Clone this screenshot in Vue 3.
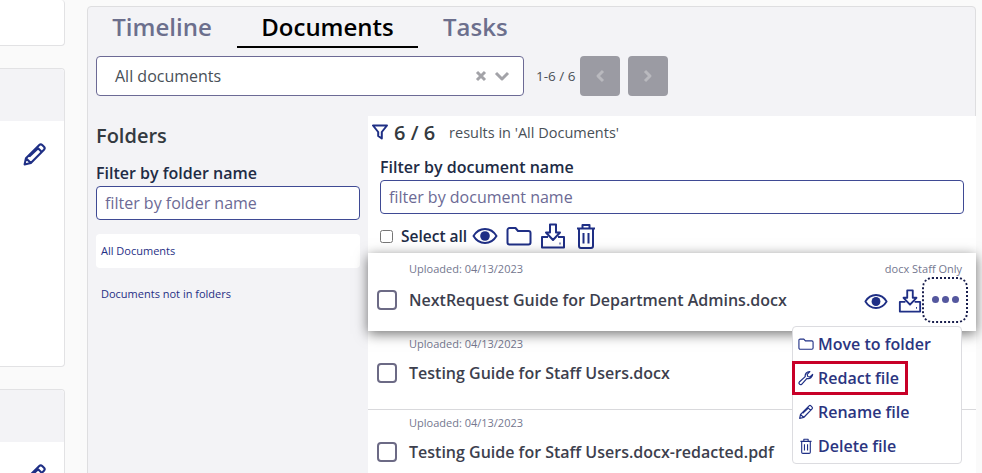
<script setup>
const rows = [
  { name: "NextRequest Guide for Department Admins.docx", active: true },
  { name: "Testing Guide for Staff Users.docx" },
  { name: "Testing Guide for Staff Users.docx-redacted.pdf" },
];
const menu = ["Move to folder", "Redact file", "Rename file", "Delete file"];
</script>

<template>
  <div class="page">
    <div class="side">
      <div class="side__card side__card--first"></div>
      <div class="side__card side__card--tall">
        <div class="side__head"></div>
        <div class="side__body">
          <svg class="side__pencil" viewBox="0 0 24 24"><path d="M2.5 21.5l1.3-6L16.6 2.9a2 2 0 0 1 2.8 0l1.7 1.7a2 2 0 0 1 0 2.8L8.500 20.200zM3.800 15.500l4.700 4.700M14.500 5l4.500 4.500M7 14L15.500 6" /></svg>
        </div>
      </div>
      <div class="side__card">
        <div class="side__head"></div>
        <div class="side__body">
          <svg class="side__pencil" viewBox="0 0 24 24"><path d="M2.5 21.5l1.3-6L16.6 2.9a2 2 0 0 1 2.8 0l1.7 1.7a2 2 0 0 1 0 2.8L8.500 20.200zM3.800 15.500l4.700 4.700M14.500 5l4.500 4.500M7 14L15.500 6" /></svg>
        </div>
      </div>
    </div>

    <div class="panel">
      <div class="tabs">
        <span class="tab tab--timeline">Timeline</span>
        <span class="tab tab--active">Documents</span>
        <span class="tab tab--tasks">Tasks</span>
      </div>

      <div class="toolbar">
        <div class="select">
          <span>All documents</span>
          <span class="select__icons">
            <svg width="12" height="12" viewBox="0 0 12 12"><path d="M2 2l8 8M10 2l-8 8" /></svg>
            <svg width="16" height="12" viewBox="0 0 16 12"><path d="M2 3l6 6 6-6" /></svg>
          </span>
        </div>
        <span class="pager">1-6 / 6</span>
        <button class="page-btn"><svg width="10" height="14" viewBox="0 0 10 14"><path d="M8 2L3 7l5 5" /></svg></button>
        <button class="page-btn"><svg width="10" height="14" viewBox="0 0 10 14"><path d="M2 2l5 5-5 5" /></svg></button>
      </div>

      <div class="content">
        <div class="folders">
          <h2>Folders</h2>
          <label class="label">Filter by folder name</label>
          <input class="input" type="text" placeholder="filter by folder name" />
          <div class="folder folder--active">All Documents</div>
          <div class="folder">Documents not in folders</div>
        </div>

        <div class="docs">
          <div class="results">
            <svg class="results__icon" viewBox="0 0 16 16"><path d="M1 1.500h14L9.800 8v6.500L6.200 12V8z" /></svg>
            <strong>6 / 6</strong>
            <span>results in 'All Documents'</span>
          </div>
          <div class="docs__filter">
            <label class="label">Filter by document name</label>
            <input class="input" type="text" placeholder="filter by document name" />
            <div class="select-all">
              <input type="checkbox" class="select-all__box" />
              <span class="select-all__text">Select all</span>
              <svg class="icon icon--eye" viewBox="0 0 26 18"><path d="M1.500 9C4.500 4 8.500 2 13 2s8.500 2 11.500 7c-3 5-7 7-11.500 7S4.500 14 1.500 9z" /><circle class="fill" cx="13" cy="9" r="4.800" /></svg>
              <svg class="icon icon--folder" viewBox="0 0 26 20"><path d="M1.500 4a2 2 0 0 1 2-2h6l2.500 3h10.500a2 2 0 0 1 2 2v9.500a2 2 0 0 1-2 2h-19a2 2 0 0 1-2-2z" /></svg>
              <svg class="icon icon--down" viewBox="0 0 26 26"><path d="M10 1.500h6v8h4L13 17 6 9.500h4zM8 14H2v10.500h22V14h-6M19.500 20.500h1" /></svg>
              <svg class="icon icon--trash" viewBox="0 0 20 26"><path d="M1 5.500h18M6.500 5.500V2h7v3.500M3 5.500v17.500a2 2 0 0 0 2 2h10a2 2 0 0 0 2-2V5.500M7.500 10v10.500M12.500 10v10.500" /></svg>
            </div>
          </div>

          <div class="rows">
            <div v-for="row in rows" :key="row.name" class="row" :class="{ 'row--active': row.active }">
              <div class="row__meta">
                <span>Uploaded: 04/13/2023</span>
                <span v-if="row.active" class="row__type">docx Staff Only</span>
              </div>
              <div class="row__main">
                <span class="row__check"></span>
                <span class="row__name">{{ row.name }}</span>
                <div v-if="row.active" class="row__actions">
                  <svg class="icon icon--eye" viewBox="0 0 26 18"><path d="M1.500 9C4.500 4 8.500 2 13 2s8.500 2 11.500 7c-3 5-7 7-11.500 7S4.500 14 1.500 9z" /><circle class="fill" cx="13" cy="9" r="4.800" /></svg>
                  <svg class="icon icon--down" viewBox="0 0 26 26"><path d="M10 1.500h6v8h4L13 17 6 9.500h4zM8 14H2v10.500h22V14h-6M19.500 20.500h1" /></svg>
                  <button class="more"><i></i><i></i><i></i></button>
                </div>
              </div>
            </div>

            <div class="menu">
              <div v-for="(item, i) in menu" :key="item" class="menu__item" :class="{ 'menu__item--hl': i === 1 }">
                <svg v-if="i === 0" viewBox="0 0 26 20" class="menu__icon"><path d="M1.500 4a2 2 0 0 1 2-2h6l2.500 3h10.500a2 2 0 0 1 2 2v9.500a2 2 0 0 1-2 2h-19a2 2 0 0 1-2-2z" /></svg>
                <svg v-if="i === 1" viewBox="0 0 24 24" class="menu__icon"><path d="M22 6.500a6.500 6.500 0 0 1-8.500 6.200L5.500 21.500a2.500 2.500 0 0 1-3.500-3.500l8.800-8a6.500 6.500 0 0 1 7-7.500l-4 4 .8 3.200 3.200.8z" /></svg>
                <svg v-if="i === 2" viewBox="0 0 24 24" class="menu__icon"><path d="M2.500 21.500l1.300-6L16.600 2.900a2 2 0 0 1 2.800 0l1.700 1.700a2 2 0 0 1 0 2.800L8.500 20.200zM3.800 15.500l4.700 4.700M14.500 5l4.500 4.500M7 14l8.500-8" /></svg>
                <svg v-if="i === 3" viewBox="0 0 20 26" class="menu__icon"><path d="M1 5.500h18M6.500 5.500V2h7v3.500M3 5.500v17.500a2 2 0 0 0 2 2h10a2 2 0 0 0 2-2V5.500M7.500 10v10.500M12.500 10v10.500" /></svg>
                <span>{{ item }}</span>
              </div>
            </div>
          </div>
        </div>
      </div>
    </div>
  </div>
</template>

<style>
html,
body {
  margin: 0;
  background: #fafafa;
}
</style>

<style scoped>
* {
  box-sizing: border-box;
}
.page {
  display: flex;
  height: 473px;
  width: 982px;
  overflow: hidden;
  font-family: "Open Sans", sans-serif;
  color: #343a40;
  background: #fafafa;
}
svg path,
svg circle {
  fill: none;
  stroke: #1f2f85;
  stroke-width: 2;
  stroke-linejoin: round;
}
svg circle.fill {
  fill: #1f2f85;
  stroke: none;
}

.side {
  width: 65px;
  flex: none;
  margin-right: 22px;
  display: flex;
  flex-direction: column;
  gap: 22px;
}
.side__card {
  flex: none;
  background: #fff;
  border: 1px solid #e2e2e4;
  border-left: 0;
  border-radius: 0 4px 4px 0;
  height: 120px;
}
.side__card--first {
  height: 46px;
  margin-top: 0;
  border-top: 0;
}
.side__card--tall {
  height: 299px;
}
.side__head {
  height: 52px;
  background: #f3f3f6;
  border-radius: 0 4px 0 0;
}
.side__body {
  display: flex;
  justify-content: flex-end;
  padding: 21px 17px 0 0;
}
.side__pencil {
  width: 25px;
  height: 25px;
}

.panel {
  width: 889px;
  flex: none;
  margin-top: 6px;
  height: 480px;
  background: #f3f3f6;
  border: 1px solid #dedee0;
  border-radius: 4px 4px 0 0;
}
.tabs {
  display: flex;
  height: 41px;
  font-size: 24px;
  font-weight: 600;
  line-height: 40px;
}
.tab {
  color: #6c6f8d;
  text-align: center;
}
.tab--timeline {
  margin-left: 24px;
  width: 100px;
}
.tab--active {
  color: #000;
  width: 181px;
  margin-left: 25px;
  border-bottom: 2px solid #000;
}
.tab--tasks {
  margin-left: 25px;
}

.toolbar {
  display: flex;
  align-items: center;
  margin: 8px 0 0 8px;
  height: 40px;
}
.select {
  width: 428px;
  height: 40px;
  display: flex;
  align-items: center;
  justify-content: space-between;
  padding: 0 13px 0 18px;
  background: #fff;
  border: 1px solid #6c6a95;
  border-radius: 4px;
  font-size: 16px;
  color: #495057;
}
.select__icons {
  display: flex;
  align-items: center;
  gap: 7px;
}
.select__icons path {
  stroke: #a3a3a8;
  stroke-width: 3;
}
.pager {
  font-size: 13.5px;
  margin-left: 12px;
  width: 44px;
  white-space: nowrap;
  color: #495057;
}
.page-btn {
  width: 40px;
  height: 40px;
  margin-right: 8px;
  padding: 0;
  border: 0;
  border-radius: 4px;
  background: #9b9ba3;
  display: flex;
  align-items: center;
  justify-content: center;
}
.page-btn path {
  stroke: #b9b9be;
  stroke-width: 3;
}

.content {
  display: flex;
  margin-top: 20px;
}
.folders {
  width: 280px;
  flex: none;
  padding-left: 8px;
}
.folders h2 {
  margin: 6px 0 0;
  font-size: 20px;
  line-height: 27px;
  font-weight: 600;
  color: #343a40;
}
.label {
  display: block;
  font-size: 16px;
  font-weight: 600;
  line-height: 22px;
  color: #212b45;
}
.folders .label {
  margin-top: 13px;
  margin-bottom: 2px;
}
.input {
  display: block;
  width: 100%;
  height: 34px;
  padding: 0 8px;
  border: 1px solid #3f4a94;
  border-radius: 4px;
  background: #fff;
  font-family: inherit;
  font-size: 16px;
}
.input::placeholder {
  color: #6c6a95;
  opacity: 1;
}
.folders .input {
  width: 264px;
}
.folder {
  width: 264px;
  height: 34px;
  margin-top: 9px;
  padding-left: 5px;
  font-size: 11px;
  line-height: 34px;
  color: #1f2f85;
}
.folder--active {
  margin-top: 14px;
  background: #fff;
  border-radius: 4px;
}

.docs {
  width: 608px;
  flex: none;
  height: 360px;
  background: #fff;
}
.results {
  display: flex;
  align-items: center;
  height: 32px;
  padding-left: 4px;
}
.results__icon {
  width: 16px;
  height: 18px;
  margin-right: 5px;
}
.results strong {
  font-size: 20px;
  font-weight: 600;
  margin-right: 14px;
  margin-left: 1px;
}
.results span {
  font-size: 14.5px;
  color: #495057;
}
.docs__filter {
  padding: 8px 12px 0;
}
.docs__filter .label {
  margin-bottom: 2px;
}
.docs__filter .input {
  width: 584px;
}
.select-all {
  display: flex;
  align-items: center;
  height: 30px;
  margin-top: 7px;
}
.select-all__box {
  width: 13px;
  height: 13px;
  margin: 0 8px 0 0;
}
.select-all__text {
  font-size: 15.500px;
  font-weight: 600;
  color: #212b45;
  margin-right: 5px;
}
.icon {
  display: block;
  flex: none;
}
.icon--eye {
  width: 26px;
  height: 18px;
}
.icon--folder {
  width: 26px;
  height: 20px;
  margin-left: 8px;
}
.icon--down {
  width: 26px;
  height: 26px;
  margin-left: 8px;
}
.icon--trash {
  width: 20px;
  height: 26px;
  margin-left: 10px;
}

.rows {
  position: relative;
  margin-top: 2px;
}
.row {
  height: 79px;
  padding: 8px 14px 0 9px;
  border-bottom: 1px solid #d9d9dc;
  background: #fff;
}
.row--active {
  position: relative;
  height: 78px;
  border-bottom: 0;
  box-shadow: 0 3px 12px rgba(0, 0, 0, 0.55);
  z-index: 1;
}
.row__meta {
  display: flex;
  justify-content: space-between;
  padding-left: 32px;
  font-size: 11px;
  line-height: 16px;
  color: #74778f;
}
.row:not(.row--active) .row__meta {
  margin-top: -3px;
}
.row__main {
  display: flex;
  align-items: center;
  height: 36px;
  margin-top: 5px;
}
.row:not(.row--active) .row__main {
  margin-top: 3px;
}
.row__check {
  width: 20px;
  height: 20px;
  flex: none;
  border: 2px solid #6c6a85;
  border-radius: 4px;
  margin-right: 12px;
}
.row__name {
  font-size: 16px;
  font-weight: 600;
  color: #3d3f4e;
  white-space: nowrap;
}
.row__actions {
  display: flex;
  align-items: center;
  margin-left: auto;
  margin-top: 2px;
}
.row__actions .icon--eye {
  width: 24px;
  height: 17px;
}
.row__actions .icon--down {
  width: 24px;
  height: 24px;
  margin-left: 10px;
}
.more {
  width: 46px;
  height: 46px;
  margin: -3px -6px 0 0;
  padding: 0;
  display: flex;
  align-items: center;
  justify-content: center;
  gap: 3px;
  background: #fff;
  border: 2px dotted #1a1f4e;
  border-radius: 10px;
  position: relative;
}
.more i {
  width: 7px;
  height: 7px;
  border-radius: 50%;
  background: #54579e;
}

.menu {
  position: absolute;
  top: 73px;
  right: 14px;
  width: 170px;
  height: 138px;
  padding: 0;
  background: #fff;
  border: 1px solid #dcdce0;
  border-radius: 4px;
  z-index: 2;
}
.menu__item {
  display: flex;
  align-items: center;
  height: 34px;
  padding-left: 5px;
  font-size: 16px;
  font-weight: 600;
  color: #2b3580;
}
.menu__item--hl {
  width: 116px;
  margin-left: -1px;
  padding-left: 6px;
  border: 3px solid #c80028;
  padding-left: 3px;
}
.menu__icon {
  width: 16px;
  height: 16px;
  margin-right: 4px;
  flex: none;
}
.menu__icon path {
  stroke-width: 1.800;
}
</style>
